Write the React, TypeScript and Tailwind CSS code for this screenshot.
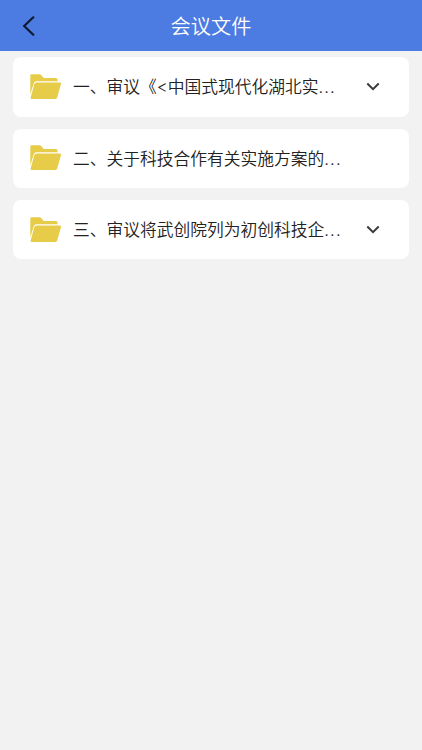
import React from 'react';

interface MeetingFile {
  id: number;
  title: string;
  expandable: boolean;
}

const files: MeetingFile[] = [
  { id: 1, title: '一、审议《<中国式现代化湖北实', expandable: true },
  { id: 2, title: '二、关于科技合作有关实施方案的', expandable: false },
  { id: 3, title: '三、审议将武创院列为初创科技企', expandable: true },
];

function FolderIcon() {
  return (
    <svg width="32" height="26" viewBox="0 0 32 26" fill="#e6cc48" className="shrink-0">
      <path d="M0.3 20.5V1.6Q0.3 0.3 1.6 0.3H9.6Q10.5 0.3 11.1 1L13.7 4.1H26Q27.5 4.1 27.5 5.6V7.2H6.4Q4.4 7.2 3.7 9.2Z" />
      <path d="M6.3 8.5H29.9Q31.4 8.5 31 10L27.2 23.4Q26.7 24.9 25.2 24.9H1.8Q0.3 24.9 0.7 23.4L4.3 10Q4.8 8.5 6.3 8.5Z" />
    </svg>
  );
}

function FileRow({ file }: { file: MeetingFile }) {
  return (
    <div className="flex h-[59.3px] items-center rounded-lg bg-white pl-[17.3px] pr-[29px]">
      <FolderIcon />
      <div className="ml-[11px] whitespace-nowrap pt-[2px] text-[16.75px] font-[350] text-[#222]">
        {file.title}
        <span className="tracking-[1.1px]">...</span>
      </div>
      {file.expandable && (
        <svg width="14" height="9" viewBox="0 0 14 9" fill="none" stroke="#3a3a3e" strokeWidth="2" className="ml-auto shrink-0">
          <path d="M1.3 1.5L7 7.2L12.7 1.5" />
        </svg>
      )}
    </div>
  );
}

export default function App() {
  return (
    <div className="min-h-screen bg-[#f2f2f2] font-[Inter,'Noto_Sans_CJK_SC',sans-serif]">
      <header className="relative flex h-[51px] items-center justify-center bg-[#4c7be1]">
        <svg width="13" height="20" viewBox="0 0 13 20" fill="none" stroke="#111a2c" strokeWidth="2.2" strokeLinecap="round" className="absolute left-[22px] top-[15.5px]">
          <path d="M11.3 1.3L2.2 10L11.3 18.7" />
        </svg>
        <h1 className="pt-1 text-[20.2px] font-[350] text-white">会议文件</h1>
      </header>
      <main className="flex flex-col gap-3 px-[12.7px] pt-[6.3px]">
        {files.map((file) => (
          <FileRow key={file.id} file={file} />
        ))}
      </main>
    </div>
  );
}
